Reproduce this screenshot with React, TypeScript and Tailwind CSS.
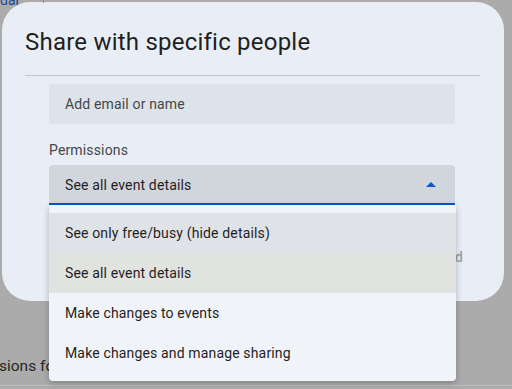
import { useState } from 'react'

const options = [
  'See only free/busy (hide details)',
  'See all event details',
  'Make changes to events',
  'Make changes and manage sharing',
]

function CaretUp() {
  return (
    <svg width="24" height="24" viewBox="0 0 24 24" fill="#0b57d0">
      <path d="M7 14l5-5 5 5z" />
    </svg>
  )
}

export default function App() {
  const [selected] = useState(1)
  const hovered = 0

  return (
    <div className="relative w-[512px] h-[389px] overflow-hidden bg-[#ababab] font-['Roboto',sans-serif]">
      {/* page behind the scrim */}
      <span className="absolute left-0 top-[-10px] text-[14px] text-[#1c4a8f]">dar</span>
      <span className="absolute left-[43px] top-0 h-[3px] w-px bg-[#8a8a8a]" />
      <span className="absolute left-[-1px] top-[354px] text-[15.5px] leading-6 text-[#262626]">
        sions for
      </span>
      <span className="absolute left-0 right-0 top-[385px] h-px bg-[#bdbdbd]" />

      {/* dialog */}
      <div className="ml-[2px] mt-[2px] w-[502px] rounded-[28px] bg-[#e9eef6] pl-[23px] pr-6 pb-6 pt-6">
        <h2 className="text-[24px] leading-8 tracking-[0.22px] text-[#1f1f1f]">
          Share with specific people
        </h2>
        <div className="mt-[17px] h-px bg-[#c4c7c5]" />

        <div className="pl-6 pr-[25px] pt-2 text-[14px] tracking-[0.15px]">
          <div className="flex h-10 items-center rounded bg-[#dde3ea] px-4 text-[#444746]">
            Add email or name
          </div>

          <div className="mt-4 leading-5 text-[#444746]">Permissions</div>

          <div className="mt-[5px] flex h-10 items-center justify-between rounded-t border-b-2 border-[#0b57d0] bg-[#d1d5dc] pl-4 pr-3 pt-[2px] text-[#1f1f1f]">
            <span>See all event details</span>
            <CaretUp />
          </div>
        </div>

        <div className="mt-8 flex justify-end pr-[5px]">
          <button className="h-10 px-3 text-[14px] font-medium text-[#9b9fa3]">Send</button>
        </div>
      </div>

      {/* open permission menu */}
      <ul className="absolute left-[49px] top-[205px] w-[407px] rounded-b bg-[#f0f4f9] py-2 text-[14px] tracking-[0.15px] text-[#1f1f1f] shadow-[0_2px_6px_rgba(0,0,0,0.25)]">
        {options.map((o, i) => (
          <li
            key={o}
            className={`flex h-10 items-center px-4 ${
              i === selected ? 'bg-[#e1e3e1]' : i === hovered ? 'bg-[#dfe3e8]' : ''
            }`}
          >
            {o}
          </li>
        ))}
      </ul>
    </div>
  )
}
